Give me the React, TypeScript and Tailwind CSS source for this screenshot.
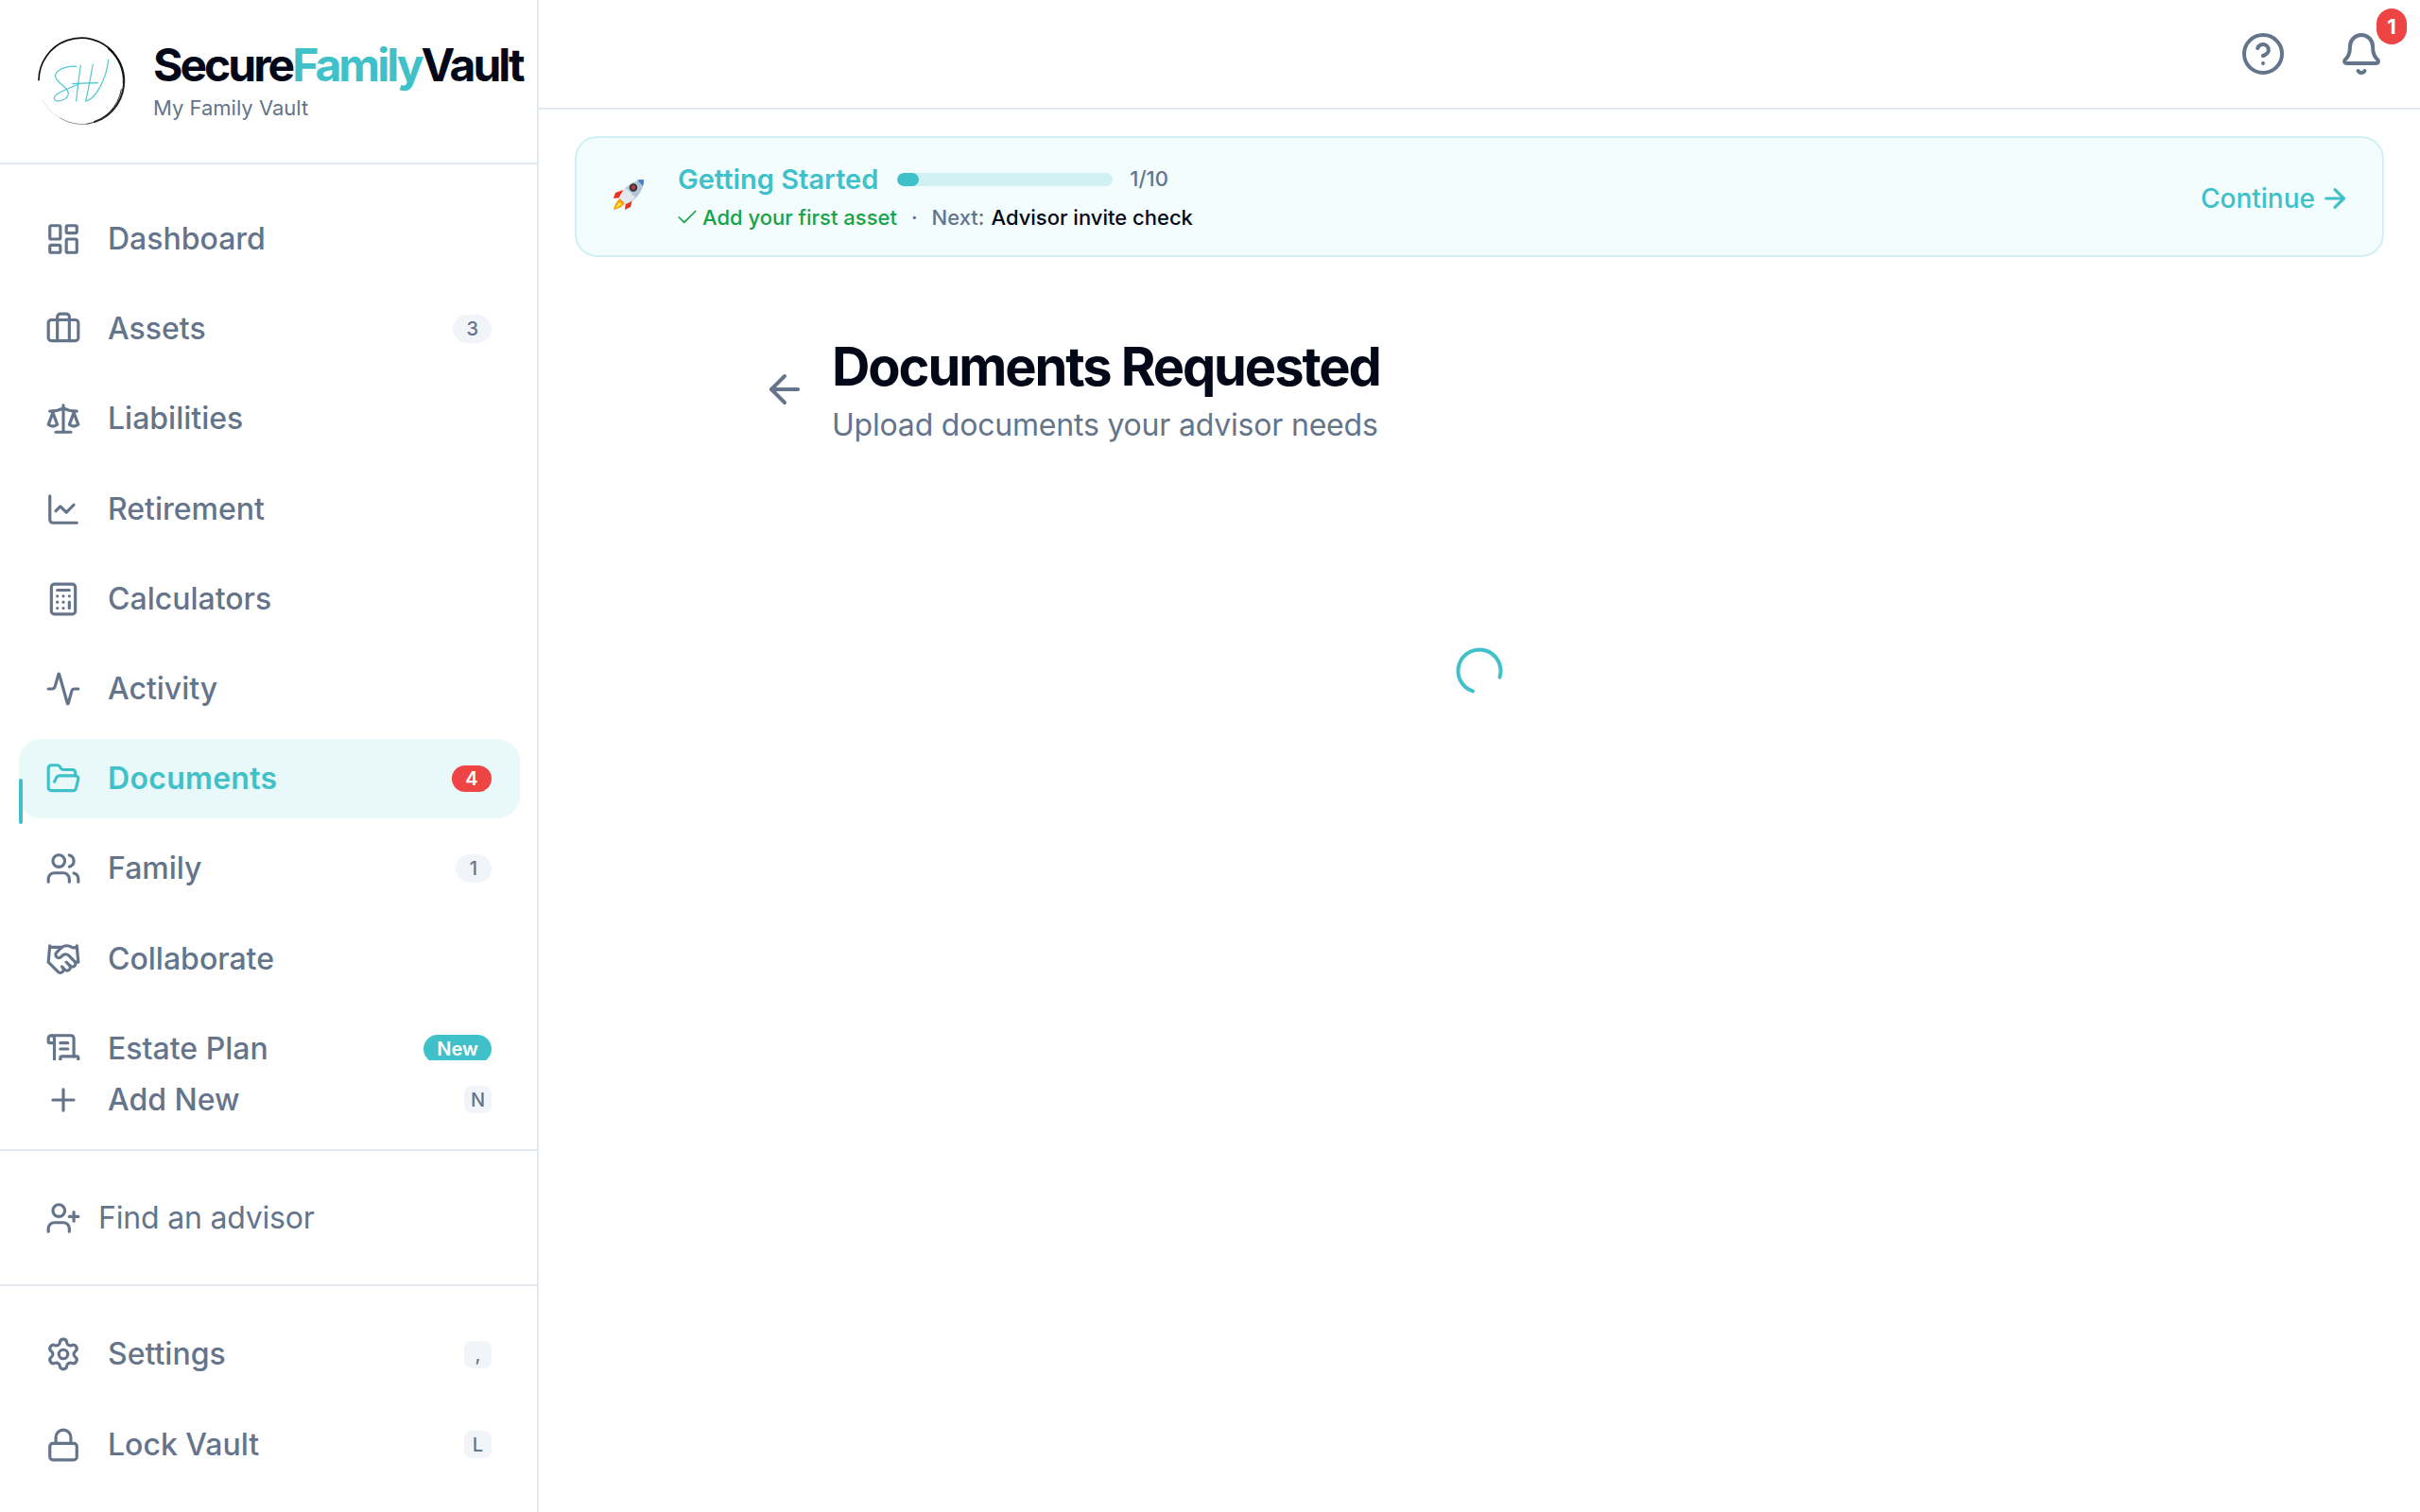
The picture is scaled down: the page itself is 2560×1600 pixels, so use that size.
import { Activity, ArrowLeft, ArrowRight, Bell, Briefcase, Calculator, ChartLine, Check, CircleHelp, FolderOpen, Handshake, LayoutDashboard, Lock, Plus, Scale, ScrollText, Settings, UserPlus, Users } from 'lucide-react'
import type { LucideIcon } from 'lucide-react'

function Logo() {
  return (
    <svg viewBox="60 55 285 285" className="h-[95px] w-[95px] shrink-0" fill="none" strokeLinecap="round">
      <path d="M63 195 A135 135 0 0 1 300 108" stroke="#111" strokeWidth="5" />
      <path d="M285 95 A135 135 0 0 1 333 205" stroke="#111" strokeWidth="7" />
      <path d="M333 190 A135 135 0 0 1 240 328" stroke="#222" strokeWidth="6" />
      <path d="M325 225 A135 135 0 0 1 215 335" stroke="#333" strokeWidth="3" />
      <path d="M215 335 A135 135 0 0 1 130 315" stroke="#999" strokeWidth="3" />
      <path d="M130 315 A135 135 0 0 1 75 258" stroke="#d4d4d4" strokeWidth="2" />
      <g stroke="#4cc6cf" strokeWidth="3.5">
        <path d="M182 152 C150 148 112 165 116 185 C120 205 158 218 157 238 C156 258 116 270 112 255 C108 238 160 222 190 208" />
        <path d="M196 148 C190 185 186 225 182 262" />
        <path d="M235 145 C228 180 222 220 212 262" />
        <path d="M170 207 C195 205 225 205 250 204" />
        <path d="M212 262 C245 255 278 190 284 130" />
      </g>
    </svg>
  )
}

function Rocket() {
  return (
    <svg viewBox="0 0 34 34" className="mb-[4px] h-[34px] w-[34px] shrink-0">
      <path d="M11 12 L3 15 L1 21 L9 20Z" fill="#e8321f" />
      <path d="M21 22 L19 30 L13 33 L14 25Z" fill="#e8321f" />
      <path d="M8 21 C4 24 2 28 1 33 C6 32 10 30 13 26Z" fill="#f59e0b" />
      <path d="M7 25 C5 27 4 29 3.5 31 C6 30 8 29 10 27Z" fill="#fde047" />
      <path d="M7 20 C11 10 21 2 33 1 C33 13 25 23 14 27Z" fill="#b5c5d3" />
      <path d="M7 20 C9 16 11 13 14 10 L24 20 C21 23 18 25 14 27Z" fill="#e1e8ee" />
      <path d="M26 1.5 C28.5 1 31 1 33 1 C33 3 33 6 32 8Z" fill="#4a86c5" />
      <circle cx="22" cy="9.5" r="4.2" fill="#27343f" />
      <circle cx="22" cy="9.5" r="2.4" fill="#b33a44" />
    </svg>
  )
}

type NavEntry = { label: string; icon: LucideIcon; badge?: string; kind?: 'count' | 'alert' | 'new' | 'key' }

const mainNav: NavEntry[] = [
  { label: 'Dashboard', icon: LayoutDashboard },
  { label: 'Assets', icon: Briefcase, badge: '3', kind: 'count' },
  { label: 'Liabilities', icon: Scale },
  { label: 'Retirement', icon: ChartLine },
  { label: 'Calculators', icon: Calculator },
  { label: 'Activity', icon: Activity },
  { label: 'Documents', icon: FolderOpen, badge: '4', kind: 'alert' },
  { label: 'Family', icon: Users, badge: '1', kind: 'count' },
  { label: 'Collaborate', icon: Handshake },
]

function Badge({ text, kind }: { text: string; kind?: NavEntry['kind'] }) {
  if (kind === 'alert') {
    return <span className="flex h-[28px] w-[42px] items-center justify-center rounded-full bg-[#ef4444] text-[20px] font-semibold text-white">{text}</span>
  }
  if (kind === 'new') {
    return <span className="flex h-[30px] w-[72px] items-center justify-center rounded-full bg-[#40c1c9] text-[20px] font-semibold text-white">{text}</span>
  }
  if (kind === 'key') {
    return <span className="flex h-[29px] w-[29px] items-center justify-center rounded-[8px] bg-[#f1f5f9] text-[20px] font-medium text-[#64748b]">{text}</span>
  }
  return <span className="flex h-[30px] min-w-[38px] items-center justify-center rounded-full bg-[#f1f5f9] px-[14px] text-[20px] font-medium text-[#64748b]">{text}</span>
}

function NavRow({ label, icon: Icon, badge, kind }: NavEntry) {
  const active = label === 'Documents'
  return (
    <div className={`relative ml-[20px] mr-[18px] flex h-[84px] shrink-0 items-center rounded-[24px] pl-[28px] pr-[30px] ${active ? 'bg-[#e9f8f8] text-[#40c1c9]' : 'text-[#64748b]'}`}>
      {active && <span className="absolute left-0 top-[42px] h-[48px] w-[4px] rounded-full bg-[#40c1c9]" />}
      <Icon className="h-[38px] w-[38px] shrink-0" strokeWidth={2} />
      <span className={`ml-[28px] flex-1 text-[32px] leading-[24px] ${active ? 'font-semibold tracking-[0.3px]' : 'font-medium'}`}>{label}</span>
      {badge && <Badge text={badge} kind={kind} />}
    </div>
  )
}

export default function App() {
  return (
    <div className="flex h-screen w-full overflow-hidden bg-white font-['Inter',sans-serif]">
      <aside className="flex w-[570px] shrink-0 flex-col border-r-2 border-[#e2e8f0]">
        <div className="flex h-[174px] shrink-0 items-start gap-[27px] border-b-2 border-[#e2e8f0] pl-[40px] pt-[38px]">
          <Logo />
          <div className="pt-[3px]">
            <div className="text-[48px] font-bold leading-[56px] tracking-[-3px] text-[#020817]">
              Secure<span className="text-[#40c1c9]">Family</span>Vault
            </div>
            <div className="mt-[1px] text-[22px] leading-[32px] text-[#64748b]">My Family Vault</div>
          </div>
        </div>

        <nav className="flex h-[1042px] shrink-0 flex-col gap-[11.2px] pt-[37px]">
          {mainNav.map((item) => (
            <NavRow key={item.label} {...item} />
          ))}
          <div className="h-[54px] shrink-0 overflow-hidden">
            <NavRow label="Estate Plan" icon={ScrollText} badge="New" kind="new" />
          </div>
          <div className="-mt-[11.2px]">
            <NavRow label="Add New" icon={Plus} badge="N" kind="key" />
          </div>
        </nav>

        <div className="flex h-[145px] shrink-0 items-center border-y-2 border-[#e2e8f0] pl-[48px] text-[#64748b]">
          <UserPlus className="h-[38px] w-[38px] shrink-0" strokeWidth={2} />
          <span className="ml-[18px] text-[32px] tracking-[-0.2px]">Find an advisor</span>
        </div>

        <div className="flex flex-col gap-[11.8px] pt-[30px]">
          <NavRow label="Settings" icon={Settings} badge="," kind="key" />
          <NavRow label="Lock Vault" icon={Lock} badge="L" kind="key" />
        </div>
      </aside>

      <main className="flex min-w-0 flex-1 flex-col">
        <header className="flex h-[116px] shrink-0 items-center justify-end gap-[56px] border-b-2 border-[#e2e8f0] pr-[38px] text-[#64748b]">
          <CircleHelp className="h-[48px] w-[48px]" strokeWidth={2} />
          <div className="relative">
            <Bell className="h-[48px] w-[48px]" strokeWidth={2} />
            <span className="absolute -right-[24px] -top-[24px] flex h-[38px] w-[32px] items-center justify-center rounded-full bg-[#ef4444] text-[22px] font-bold text-white">1</span>
          </div>
        </header>

        <section className="mx-[38px] mt-[28px] flex h-[128px] shrink-0 items-center rounded-[24px] border-2 border-[#d0f0f3] bg-[#f4fdfd] pl-[38px] pr-[34px]">
          <Rocket />
          <div className="ml-[35px] flex-1">
            <div className="flex items-center">
              <span className="text-[29px] font-semibold leading-[40px] text-[#40c1c9]">Getting Started</span>
              <div className="ml-[20px] h-[14px] w-[228px] overflow-hidden rounded-full bg-[#d0f0f3]">
                <div className="h-full w-[10%] rounded-full bg-[#40c1c9]" />
              </div>
              <span className="ml-[18px] -mt-[2px] text-[22px] font-medium text-[#64748b]">1/10</span>
            </div>
            <div className="mt-[4px] flex items-center text-[22px] font-medium leading-[32px]">
              <Check className="-ml-[3px] h-[26px] w-[26px] text-[#16a34a]" strokeWidth={1.6} />
              <span className="ml-[3px] text-[#16a34a]">Add your first asset</span>
              <span className="mx-[15px] text-[#64748b]">·</span>
              <span className="text-[#64748b]">Next:</span>
              <span className="ml-[7px] text-[#020817]">Advisor invite check</span>
            </div>
          </div>
          <div className="mt-[3px] flex items-center gap-[5px] text-[#40c1c9]">
            <span className="text-[28px] font-medium">Continue</span>
            <ArrowRight className="h-[32px] w-[32px]" strokeWidth={2.4} />
          </div>
        </section>

        <div className="mt-[84px] flex items-center pl-[236px]">
          <ArrowLeft className="mb-[3px] h-[48px] w-[48px] shrink-0 text-[#64748b]" strokeWidth={2} />
          <div className="ml-[26px]">
            <h1 className="text-[56px] font-bold leading-[64px] tracking-[-2.1px] text-[#020817]">Documents Requested</h1>
            <p className="mt-[10px] text-[32px] leading-[40px] tracking-[-0.2px] text-[#64748b]">Upload documents your advisor needs</p>
          </div>
        </div>

        <div className="mt-[210px] flex justify-center">
          <svg viewBox="0 0 24 24" className="h-[60px] w-[60px] text-[#40c1c9]" fill="none" stroke="currentColor" strokeWidth="1.6" strokeLinecap="round">
            <path d="M20.6 14.63A9 9 0 1 0 9.22 20.56" />
          </svg>
        </div>
      </main>
    </div>
  )
}
